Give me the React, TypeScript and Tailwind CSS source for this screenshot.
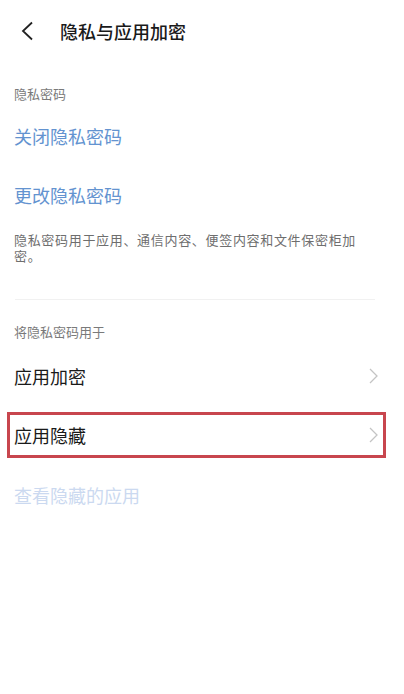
export default function App() {
  return (
    <div className="min-h-screen w-[404px] bg-white font-['Noto_Sans_CJK_SC','Noto_Sans',sans-serif] text-[#1a1a1a]">
      {/* header */}
      <div className="flex h-[62px] items-center">
        <svg width="14" height="20" viewBox="0 0 14 20" className="ml-[20px]">
          <path d="M12 1.5 L3 10 L12 18.5" fill="none" stroke="#222" strokeWidth="1.8" />
        </svg>
        <div className="ml-[26px] text-[18px] font-medium leading-[20px]">隐私与应用加密</div>
      </div>

      <div className="px-[14px]">
        <div className="mt-[22px] text-[13px] leading-[20px] text-[#7a7a7a]">隐私密码</div>
        <div className="mt-[22px] text-[18px] leading-[20px] text-[#6393d0]">关闭隐私密码</div>
        <div className="mt-[39px] text-[18px] leading-[20px] text-[#6393d0]">更改隐私密码</div>
        <div className="mt-[27px] w-[348px] text-[13px] leading-[16px] tracking-[0.68px] text-[#6e6e6e]">
          隐私密码用于应用、通信内容、便签内容和文件保密柜加密。
        </div>
      </div>

      <div className="mx-[15px] mt-[35px] h-px w-[360px] bg-[#f1f1f1]" />

      <div className="mt-[22px] px-[14px] text-[13px] leading-[20px] text-[#7a7a7a]">将隐私密码用于</div>

      <div className="mt-[12px] flex h-[44px] items-center justify-between pl-[14px] pr-[26px]">
        <span className="text-[18px] leading-[20px]">应用加密</span>
        <Chevron />
      </div>

      <div className="ml-[7px] mt-[14px] flex h-[46px] w-[379px] items-center justify-between border-[3px] border-[#c8464e] pl-[4px] pr-[5px]">
        <span className="text-[18px] leading-[20px]">应用隐藏</span>
        <Chevron />
      </div>

      <div className="mt-[27px] px-[14px] text-[18px] leading-[20px] text-[#cbd9f0]">查看隐藏的应用</div>
    </div>
  );
}

function Chevron() {
  return (
    <svg width="9" height="16" viewBox="0 0 9 16">
      <path d="M1 1 L8 8 L1 15" fill="none" stroke="#c4c4c4" strokeWidth="1.3" />
    </svg>
  );
}
